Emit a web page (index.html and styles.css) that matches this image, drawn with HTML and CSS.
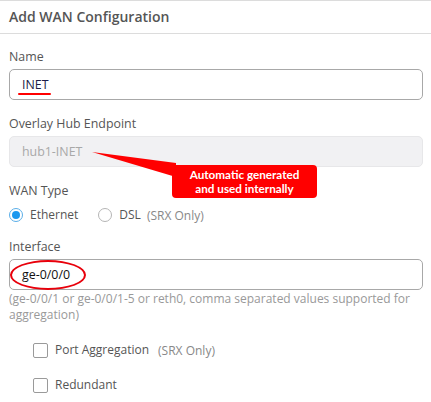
FILE: index.html
```html
<!DOCTYPE html>
<html>
<head>
<meta charset="utf-8">
<link rel="stylesheet" href="styles.css">
</head>
<body>
<div class="panel">
  <div class="header">Add WAN Configuration</div>
  <div class="form">
    <div class="field first">
      <div class="label">Name</div>
      <div class="input"><span class="val name-val">INET<span class="underline"></span></span></div>
    </div>
    <div class="field">
      <div class="label">Overlay Hub Endpoint</div>
      <div class="input disabled"><span class="val muted">hub1-INET</span></div>
    </div>
    <div class="field">
      <div class="label">WAN Type</div>
      <div class="radios">
        <span class="radio on"></span><span class="opt">Ethernet</span>
        <span class="radio dsl"></span><span class="opt">DSL</span><span class="note">(SRX Only)</span>
      </div>
    </div>
    <div class="field iface">
      <div class="label">Interface</div>
      <div class="input"><span class="val dark">ge-0/0/0</span><span class="ellipse"></span></div>
      <div class="help">(ge-0/0/1 or ge-0/0/1-5 or reth0, comma separated values supported for aggregation)</div>
    </div>
    <div class="checks">
      <div class="check"><span class="box"></span><span class="opt">Port Aggregation</span><span class="note wide">(SRX Only)</span></div>
      <div class="check"><span class="box"></span><span class="opt">Redundant</span></div>
    </div>
  </div>
  <svg class="arrow" width="431" height="402" viewBox="0 0 431 402"><polygon points="92,152 176,163 176,177" fill="#f00"/></svg>
  <div class="tip">Automatic generated<br>and used internally</div>
</div>
</body>
</html>
```

FILE: styles.css
```css
html, body {
  margin: 0;
  padding: 0;
  background: #fff;
}
body {
  font-family: "Open Sans", "Liberation Sans", sans-serif;
  color: #555;
  font-size: 12px;
}
.panel {
  position: relative;
  width: 431px;
  height: 402px;
  overflow: hidden;
}
.header {
  border-top: 1px solid #dcdcdc;
  border-bottom: 1px solid #dcdcdc;
  height: 32px;
  line-height: 32px;
  padding-left: 9px;
  font-size: 14px;
  font-weight: 600;
  color: #555;
}
.form {
  padding: 0 8px 0 9px;
  display: flex;
  flex-direction: column;
}
.field {
  display: flex;
  flex-direction: column;
  margin-top: 15px;
}
.field.first {
  margin-top: 14px;
}
.label {
  font-size: 12.4px;
  line-height: 18px;
  height: 18px;
  margin-bottom: 3px;
  color: #555;
}
.input {
  position: relative;
  height: 29px;
  border: 1px solid #a8a8a8;
  border-radius: 5px;
  display: flex;
  align-items: center;
  padding-left: 12px;
}
.input.disabled {
  background: #f1f1f3;
  border-color: #e7e7e9;
}
.val {
  position: relative;
  font-size: 12.4px;
  line-height: 18px;
}
.name-val {
  color: #1c1c48;
}
.dark {
  color: #111;
}
.muted {
  color: #a8a8a8;
}
.underline {
  position: absolute;
  left: -4px;
  top: 17px;
  width: 33px;
  height: 2px;
  background: #f00;
  border-radius: 1px;
}
.ellipse {
  position: absolute;
  left: 0px;
  top: 0px;
  width: 72px;
  height: 26px;
  border: 2.5px solid #e8000b;
  border-radius: 50%;
}
.radios {
  display: flex;
  align-items: center;
  height: 18px;
  margin-top: 3px;
}
.radio {
  box-sizing: border-box;
  width: 14px;
  height: 14px;
  border-radius: 50%;
  border: 1px solid #b5b5b5;
  background: #fff;
  position: relative;
  flex: none;
}
.radio.on {
  border-color: #5aaee8;
}
.radio.on::after {
  content: "";
  position: absolute;
  left: 2px;
  top: 2px;
  width: 8px;
  height: 8px;
  border-radius: 50%;
  background: #1b98ef;
}
.radio.dsl {
  margin-left: 20px;
}
.opt {
  margin-left: 7px;
  color: #555;
  line-height: 18px;
}
.note {
  margin-left: 6px;
  color: #888;
}
.note.wide {
  margin-left: 9px;
}
.field.iface {
  margin-top: 14px;
}
.help {
  margin-top: 1px;
  line-height: 16px;
  color: #999;
}
.checks {
  display: flex;
  flex-direction: column;
  gap: 17px;
  margin-top: 18px;
  padding-left: 24px;
}
.check {
  display: flex;
  align-items: center;
  height: 18px;
}
.box {
  box-sizing: border-box;
  width: 15px;
  height: 15px;
  border: 1px solid #9a9a9a;
  border-radius: 2px;
  background: #fff;
  flex: none;
}
.arrow {
  position: absolute;
  left: 0;
  top: 0;
  pointer-events: none;
}
.tip {
  position: absolute;
  left: 172px;
  top: 165px;
  width: 145px;
  height: 33px;
  box-sizing: border-box;
  background: #f00;
  border-radius: 4px;
  color: #fff;
  font-family: Lato, "Open Sans", sans-serif;
  font-weight: 700;
  font-size: 11.7px;
  line-height: 14px;
  text-align: center;
  padding-top: 2px;
}
```
